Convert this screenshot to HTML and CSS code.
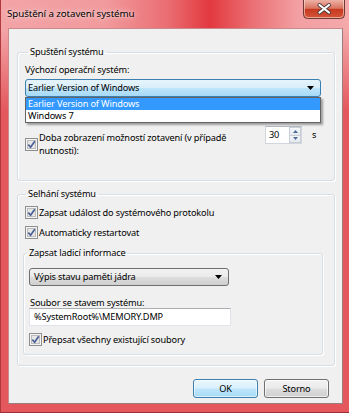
FILE: index.html
```html
<!DOCTYPE html>
<html lang="cs">
<head>
<meta charset="utf-8">
<title>Spuštění a zotavení systému</title>
<link rel="stylesheet" href="styles.css">
</head>
<body>
<div class="window">
  <div class="titlebar">
    <span class="title">Spuštění a zotavení systému</span>
    <div class="close">
      <svg width="42" height="19" viewBox="0 0 42 19">
        <defs>
          <linearGradient id="cg" x1="0" y1="0" x2="0" y2="1">
            <stop offset="0" stop-color="#eeb1a6"/>
            <stop offset="0.45" stop-color="#d9735f"/>
            <stop offset="0.5" stop-color="#c7391f"/>
            <stop offset="1" stop-color="#d5563a"/>
          </linearGradient>
        </defs>
        <path d="M0.5 0 V14.5 Q0.5 18.5 4.5 18.5 H37.5 Q41.5 18.5 41.5 14.5 V0" fill="url(#cg)" stroke="#6d3a36"/>
        <path d="M1.5 0 V14 Q1.5 17.5 5 17.5 H37 Q40.5 17.5 40.5 14 V0" fill="none" stroke="rgba(255,220,210,0.6)"/>
        <path d="M16.5 5 L26 12.5 M26 5 L16.5 12.5" stroke="#4b3a3a" stroke-width="4" stroke-linecap="round"/>
        <path d="M16.5 5 L26 12.5 M26 5 L16.5 12.5" stroke="#ffffff" stroke-width="2.2" stroke-linecap="round"/>
      </svg>
    </div>
  </div>
  <div class="client">
    <fieldset class="group g1">
      <legend>Spuštění systému</legend>
      <div class="label l1">Výchozí operační systém:</div>
      <div class="combo-wrap">
        <div class="combo open">
          <span>Earlier Version of Windows</span>
          <svg class="arrow" width="7" height="4" viewBox="0 0 7 4"><path d="M0 0H7L3.5 4Z" fill="#000"/></svg>
        </div>
        <div class="droplist">
          <div class="opt sel">Earlier Version of Windows</div>
          <div class="opt">Windows 7</div>
        </div>
      </div>
      <div class="timeout-row">
        <div class="check two-line">
          <svg class="cb" width="13" height="13" viewBox="0 0 13 13">
            <rect x="0.5" y="0.5" width="12" height="12" fill="#f4f4f4" stroke="#8e8f8f"/>
            <rect x="2.5" y="2.5" width="8" height="8" fill="#e6e6e6" stroke="#bcbcbc"/>
            <path d="M3.3 6.6 L5.6 9.2 L9.8 3.2" fill="none" stroke="#4a5f97" stroke-width="1.7"/>
          </svg>
          <span class="ctext">Doba zobrazení možností zotavení (v případě<br>nutnosti):</span>
        </div>
        <div class="spinner">
          <span class="spin-val">30</span>
          <div class="spin-btns">
            <div class="spin-btn"><svg width="5" height="3" viewBox="0 0 5 3"><path d="M0 3H5L2.5 0Z" fill="#4d6b9b"/></svg></div>
            <div class="spin-btn"><svg width="5" height="3" viewBox="0 0 5 3"><path d="M0 0H5L2.5 3Z" fill="#4d6b9b"/></svg></div>
          </div>
        </div>
        <span class="unit">s</span>
      </div>
    </fieldset>

    <fieldset class="group g2">
      <legend>Selhání systému</legend>
      <div class="check row1">
        <svg class="cb" width="13" height="13" viewBox="0 0 13 13">
          <rect x="0.5" y="0.5" width="12" height="12" fill="#f4f4f4" stroke="#8e8f8f"/>
          <rect x="2.5" y="2.5" width="8" height="8" fill="#e6e6e6" stroke="#bcbcbc"/>
          <path d="M3.3 6.6 L5.6 9.2 L9.8 3.2" fill="none" stroke="#4a5f97" stroke-width="1.7"/>
        </svg>
        <span class="ctext">Zapsat událost do systémového protokolu</span>
      </div>
      <div class="check row2">
        <svg class="cb" width="13" height="13" viewBox="0 0 13 13">
          <rect x="0.5" y="0.5" width="12" height="12" fill="#f4f4f4" stroke="#8e8f8f"/>
          <rect x="2.5" y="2.5" width="8" height="8" fill="#e6e6e6" stroke="#bcbcbc"/>
          <path d="M3.3 6.6 L5.6 9.2 L9.8 3.2" fill="none" stroke="#4a5f97" stroke-width="1.7"/>
        </svg>
        <span class="ctext">Automaticky restartovat</span>
      </div>

      <fieldset class="group inner">
        <legend>Zapsat ladicí informace</legend>
        <div class="combo plain">
          <span>Výpis stavu paměti jádra</span>
          <svg class="arrow" width="7" height="4" viewBox="0 0 7 4"><path d="M0 0H7L3.5 4Z" fill="#000"/></svg>
        </div>
        <div class="label l2">Soubor se stavem systému:</div>
        <div class="textbox">%SystemRoot%\MEMORY.DMP</div>
        <div class="check row3">
          <svg class="cb" width="13" height="13" viewBox="0 0 13 13">
            <rect x="0.5" y="0.5" width="12" height="12" fill="#f4f4f4" stroke="#8e8f8f"/>
            <rect x="2.5" y="2.5" width="8" height="8" fill="#e6e6e6" stroke="#bcbcbc"/>
            <path d="M3.3 6.6 L5.6 9.2 L9.8 3.2" fill="none" stroke="#4a5f97" stroke-width="1.7"/>
          </svg>
          <span class="ctext">Přepsat všechny existující soubory</span>
        </div>
      </fieldset>
    </fieldset>

    <div class="buttons">
      <button class="btn default">OK</button>
      <button class="btn">Storno</button>
    </div>
  </div>
</div>
</body>
</html>
```

FILE: styles.css
```css
* { box-sizing: border-box; }
html, body { margin: 0; padding: 0; background: #e55a5f; }
body { width: 349px; height: 413px; overflow: hidden; }

.window {
  width: 349px;
  height: 413px;
  padding: 0 6px 8px 7px;
  display: flex;
  flex-direction: column;
  font-family: "Noto Sans", "Open Sans", sans-serif;
  font-size: 9.2px;
  letter-spacing: -0.15px;
  color: #000;
  background:
    linear-gradient(to bottom, rgba(229,90,95,0) 0, rgba(229,90,95,0) 30px, #e4585d 110px),
    linear-gradient(to right, #f3a4a7 0%, #f19a9d 30%, #ea6d72 48%, #e2393f 60%, #ea6f73 72%, #f29fa2 85%, #f4a9ab 100%);
  border-left: 1px solid #b0393d;
  border-bottom: 1px solid #9c2f33;
}

.titlebar {
  height: 28px;
  flex: none;
  display: flex;
  align-items: flex-start;
  justify-content: space-between;
}
.title {
  margin-top: 7px;
  margin-left: -1px;
  line-height: 14px;
  font-size: 9.8px;
  letter-spacing: -0.1px;
  text-shadow: 0 0 6px rgba(255,255,255,0.8), 0 0 3px rgba(255,255,255,0.6);
}
.close { width: 42px; height: 19px; margin-right: -2px; }
.close svg { display: block; }

.client {
  flex: 1;
  background: #f0f0f0;
  border: 1px solid;
  border-color: #c98a8c #9a7d7e #9a7d7e #c98a8c;
  display: flex;
  flex-direction: column;
}

.group {
  margin: 0;
  border: 1px solid #d5dfe5;
  border-radius: 3px;
  box-shadow: inset 1px 1px 0 #ffffff, 1px 1px 0 #ffffff;
  min-width: 0;
}
.group legend {
  padding: 0 2px;
  margin-left: 3px;
  line-height: 16px;
}

.g1 {
  margin: 15px 7px 0 8px;
  padding: 0 0 23px 7px;
}
.label { line-height: 13px; }
.l1 { margin-top: 3px; }

.combo-wrap { position: relative; margin-top: 3px; width: 296px; }
.combo {
  height: 18px;
  border: 1px solid #707070;
  border-radius: 3px;
  display: flex;
  align-items: center;
  justify-content: space-between;
  padding: 0 6px 0 2px;
  line-height: 14px;
}
.combo.open {
  border-color: #3c7fb1;
  background: linear-gradient(to bottom, #e5f4fc 0%, #d9eef9 48%, #bde5fb 52%, #a7d9f5 100%);
}
.combo.plain {
  width: 200px;
  margin-top: 7px;
  margin-left: 5px;
  padding-left: 4px;
  background: linear-gradient(to bottom, #f2f2f2 0%, #ebebeb 48%, #dddddd 52%, #cfcfcf 100%);
}
.arrow { display: block; flex: none; }

.droplist {
  position: absolute;
  top: 100%;
  left: 0;
  width: 296px;
  background: #fff;
  border: 1px solid #646464;
  box-shadow: 2px 2px 2px rgba(0,0,0,0.35);
  z-index: 2;
}
.opt { height: 12px; line-height: 12px; padding-left: 2px; }
.opt.sel { background: #3399ff; color: #fff; }

.timeout-row {
  display: flex;
  align-items: flex-start;
  margin-top: 29px;
}
.check { display: flex; align-items: center; }
.cb { display: block; flex: none; }
.ctext { line-height: 13px; margin-left: 1px; }
.two-line { width: 240px; margin-top: 5px; }

.spinner {
  width: 37px;
  height: 18px;
  display: flex;
  border: 1px solid #d0d6dc;
  border-top-color: #b6bcc2;
  background: #fff;
}
.spin-val { flex: 1; padding-left: 3px; line-height: 16px; }
.spin-btns { width: 12px; display: flex; flex-direction: column; }
.spin-btn {
  flex: 1;
  display: flex;
  align-items: center;
  justify-content: center;
  border: 1px solid #c8ced6;
  background: linear-gradient(to bottom, #f5f7fa, #e4e9ef);
}
.spin-btn + .spin-btn { border-top: none; }
.spin-btn svg { display: block; }
.unit { margin-left: 10px; line-height: 13px; margin-top: 2px; }

.g2 {
  margin: 5px 7px 0 8px;
  padding: 0 12px 10px 5px;
}
.row1 { margin-top: 4px; padding-left: 2px; }
.row2 { margin-top: 7px; padding-left: 2px; }

.inner {
  margin-top: 6px;
  width: 300px;
  padding: 0 0 8px 0;
}
.l2 { margin-top: 11px; margin-left: 6px; line-height: 11px; }
.textbox {
  margin-left: 5px;
  width: 202px;
  height: 18px;
  background: #fff;
  border: 1px solid #e2e3ea;
  border-top-color: #abadb3;
  padding-left: 4px;
  line-height: 16px;
}
.row3 { margin-top: 7px; margin-left: 5px; }

.buttons {
  display: flex;
  justify-content: flex-end;
  gap: 6px;
  margin: 13px 13px 0 0;
}
.btn {
  width: 65px;
  height: 19px;
  padding: 0;
  font: inherit;
  letter-spacing: inherit;
  color: #000;
  border: 1px solid #707070;
  border-radius: 3px;
  background: linear-gradient(to bottom, #f2f2f2 0%, #ebebeb 48%, #dddddd 52%, #cfcfcf 100%);
  box-shadow: inset 0 0 0 1px rgba(255,255,255,0.7);
}
.btn.default {
  border-color: #3c7fb1;
  background: linear-gradient(to bottom, #eaf6fd 0%, #d9f0fc 48%, #bee6fd 52%, #a7d9f5 100%);
  box-shadow: inset 0 0 0 1px rgba(255,255,255,0.6);
}
```
